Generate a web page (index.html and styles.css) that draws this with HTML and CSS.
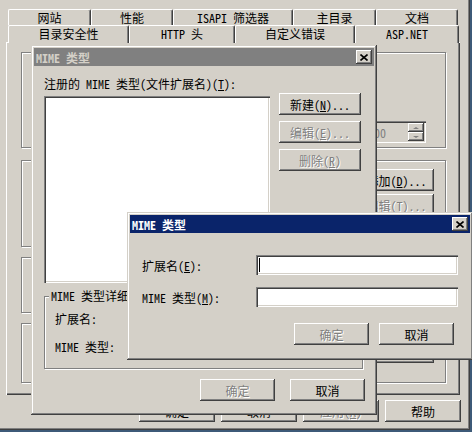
FILE: index.html
```html
<!DOCTYPE html>
<html lang="zh-CN">

<head>
    <meta charset="UTF-8">
    <title>MIME 类型</title>
    <link rel="stylesheet" href="styles.css">
</head>

<body>

    <div class="sheet">
        <div class="tabs row-back">
            <div class="tab">网站</div>
            <div class="tab">性能</div>
            <div class="tab">ISAPI 筛选器</div>
            <div class="tab">主目录</div>
            <div class="tab">文档</div>
        </div>
        <div class="tabs row-front">
            <div class="tab">目录安全性</div>
            <div class="tab active">HTTP 头</div>
            <div class="tab">自定义错误</div>
            <div class="tab">ASP.NET</div>
        </div>

        <div class="panel">
            <div class="group g1">
                <div class="spin-edit">
                    <span>1200</span>
                    <div class="spin">
                        <div class="spin-btn"><i class="arr up"></i></div>
                        <div class="spin-btn"><i class="arr down"></i></div>
                    </div>
                </div>
            </div>
            <div class="group g2">
                <button class="btn">添加(<u>D</u>)...</button>
                <button class="btn" disabled>编辑(<u>T</u>)...</button>
            </div>
            <div class="group g3"></div>
            <div class="group g4">
                <button class="btn">删除(<u>V</u>)</button>
            </div>
        </div>

        <div class="sheet-buttons">
            <button class="btn">确定</button>
            <button class="btn">取消</button>
            <button class="btn" disabled>应用(<u>A</u>)</button>
            <button class="btn">帮助</button>
        </div>
    </div>

    <!-- MIME 类型列表 (非活动窗口) -->
    <div class="win mime-list">
        <div class="titlebar inactive">
            <span>MIME 类型</span>
            <button class="close"><svg width="8" height="7" viewBox="0 0 8 7"><path d="M0.5 0.5 L7.5 6.5 M7.5 0.5 L0.5 6.5" stroke="#000" stroke-width="1.6" /></svg></button>
        </div>
        <div class="list-body">
            <div class="list-grid">
                <label class="list-label">注册的 MIME 类型(文件扩展名)(<u>T</u>):</label>
                <div class="listbox"></div>
                <div class="side-buttons">
                    <button class="btn">新建(<u>N</u>)...</button>
                    <button class="btn" disabled>编辑(<u>E</u>)...</button>
                    <button class="btn" disabled>删除(<u>R</u>)</button>
                </div>
            </div>

            <div class="details">
                <span class="legend">MIME 类型详细信息</span>
                <div class="detail-row">扩展名:</div>
                <div class="detail-row">MIME 类型:</div>
            </div>

            <div class="dialog-buttons">
                <button class="btn" disabled>确定</button>
                <button class="btn">取消</button>
            </div>
        </div>
    </div>

    <!-- MIME 类型编辑 (活动窗口) -->
    <div class="win mime-edit">
        <div class="titlebar">
            <span>MIME 类型</span>
            <button class="close"><svg width="8" height="7" viewBox="0 0 8 7"><path d="M0.5 0.5 L7.5 6.5 M7.5 0.5 L0.5 6.5" stroke="#000" stroke-width="1.6" /></svg></button>
        </div>
        <div class="edit-body">
            <div class="field-grid">
                <label>扩展名(<u>E</u>):</label>
                <div class="edit"><span class="caret"></span></div>
                <label>MIME 类型(<u>M</u>):</label>
                <div class="edit"></div>
            </div>
            <div class="dialog-buttons">
                <button class="btn" disabled>确定</button>
                <button class="btn">取消</button>
            </div>
        </div>
    </div>

</body>

</html>
```

FILE: styles.css
```css
* {
    box-sizing: border-box;
}

body {
    margin: 0;
    width: 472px;
    height: 432px;
    overflow: hidden;
    position: relative;
    background-color: #3d5a78;
    font-family: "Noto Sans Mono CJK SC", "Noto Sans CJK SC", sans-serif;
    font-size: 12px;
    color: #000;
}

/* 属性页 */
.sheet {
    width: 470px;
    height: 430px;
    background-color: #d4d0c8;
    padding: 9px 9px 0 6px;
    box-shadow: inset -1px -1px #404040, inset -2px -2px #808080;
}

.tabs {
    display: grid;
    margin-left: 2px;
}

.row-back {
    grid-template-columns: 83px 82px 120px 83px 82px;
    height: 16px;
}

.row-front {
    grid-template-columns: 121px 106px 120px 104px;
    height: 17px;
}

.tab {
    height: 100%;
    line-height: 15px;
    text-align: center;
    white-space: nowrap;
    background-color: #d4d0c8;
    border-top: 1px solid #fff;
    border-left: 1px solid #fff;
    border-right: 1px solid #404040;
    box-shadow: inset -1px 0 #808080;
    border-radius: 2px 2px 0 0;
}

.row-front .tab {
    line-height: 16px;
}

.tab.active {
    height: 18px;
    position: relative;
    z-index: 1;
}

.panel {
    width: 454px;
    height: 353px;
    padding: 9px 0 0 14px;
    border-top: 1px solid #fff;
    border-left: 1px solid #fff;
    box-shadow: inset -1px -1px #404040, inset -2px -2px #808080;
}

.group {
    width: 425px;
    border: 1px solid #808080;
    box-shadow: inset 1px 1px #fff, 1px 1px #fff;
    display: flex;
    flex-direction: column;
    align-items: flex-end;
}

.g1 {
    height: 96px;
    padding: 68px 19px 0 0;
}

.g2 {
    height: 87px;
    margin-top: 12px;
    padding: 8px 11px 0 0;
    gap: 3px;
}

.g3 {
    height: 56px;
    margin-top: 10px;
}

.g4 {
    height: 60px;
    margin-top: 10px;
    padding: 17px 11px 0 0;
}

.spin-edit {
    width: 86px;
    height: 22px;
    display: flex;
    align-items: center;
    justify-content: space-between;
    padding: 0 2px 0 22px;
    color: #808080;
    background-color: #d4d0c8;
    box-shadow: inset 1px 1px #808080, inset 2px 2px #404040, inset -1px -1px #fff, inset -2px -2px #d4d0c8;
}

.spin {
    width: 16px;
    height: 18px;
    display: flex;
    flex-direction: column;
}

.spin-btn {
    flex: 1;
    display: flex;
    align-items: center;
    justify-content: center;
    box-shadow: inset -1px -1px #404040, inset 1px 1px #fff, inset -2px -2px #808080;
}

.arr {
    width: 0;
    height: 0;
    border-left: 3px solid transparent;
    border-right: 3px solid transparent;
}

.arr.up {
    border-bottom: 2px solid #808080;
}

.arr.down {
    border-top: 2px solid #808080;
}

.sheet-buttons {
    display: flex;
    justify-content: flex-end;
    gap: 6px;
    margin-top: 5px;
}

.sheet-buttons .btn {
    width: 76px;
    height: 22px;
}

/* 按钮 */
.btn {
    width: 75px;
    height: 22px;
    padding: 0;
    border: none;
    font: inherit;
    color: #000;
    background-color: #d4d0c8;
    box-shadow: inset -1px -1px #404040, inset 1px 1px #fff, inset -2px -2px #808080;
    display: flex;
    align-items: center;
    justify-content: center;
    white-space: nowrap;
}

.btn:disabled {
    color: #808080;
    text-shadow: 1px 1px #fff;
}

/* 窗口 */
.win {
    position: absolute;
    width: 346px;
    padding: 3px;
    background-color: #d4d0c8;
    box-shadow: inset -1px -1px #404040, inset 1px 1px #d4d0c8, inset -2px -2px #808080, inset 2px 2px #fff;
}

.titlebar {
    height: 18px;
    display: flex;
    align-items: center;
    justify-content: space-between;
    padding: 0 2px 0 2px;
    background-color: #0a246a;
    color: #fff;
    font-weight: bold;
}

.titlebar.inactive {
    background-color: #808080;
    color: #d4d0c8;
}

.close {
    width: 16px;
    height: 14px;
    padding: 0;
    border: none;
    background-color: #d4d0c8;
    box-shadow: inset -1px -1px #404040, inset 1px 1px #fff, inset -2px -2px #808080;
    display: flex;
    align-items: center;
    justify-content: center;
}

.close svg {
    display: block;
}

.mime-list {
    left: 31px;
    top: 45px;
    height: 370px;
}

.list-body {
    padding: 11px 9px 0 10px;
}

.list-grid {
    display: grid;
    grid-template-columns: 226px 82px;
    column-gap: 9px;
}

.list-label {
    grid-column: 1 / 3;
    height: 13px;
    line-height: 13px;
    margin-bottom: 6px;
    white-space: nowrap;
}

.listbox {
    height: 187px;
    background-color: #fff;
    box-shadow: inset 1px 1px #808080, inset 2px 2px #404040, inset -1px -1px #fff, inset -2px -2px #d4d0c8;
}

.side-buttons {
    margin-top: -3px;
    display: flex;
    flex-direction: column;
    gap: 6px;
}

.side-buttons .btn {
    width: 82px;
}

.details {
    position: relative;
    width: 319px;
    height: 73px;
    margin-top: 13px;
    padding: 15px 0 0 10px;
    border: 1px solid #808080;
    box-shadow: inset 1px 1px #fff, 1px 1px #fff;
    display: flex;
    flex-direction: column;
    gap: 15px;
}

.legend {
    position: absolute;
    top: -8px;
    left: 4px;
    padding: 0 2px;
    line-height: 14px;
    background-color: #d4d0c8;
}

.detail-row {
    line-height: 13px;
}

.dialog-buttons {
    display: flex;
    justify-content: flex-end;
    gap: 15px;
    margin-top: 10px;
}

.mime-edit {
    left: 127px;
    top: 212px;
    height: 148px;
}

.edit-body {
    padding: 22px 16px 0 12px;
}

.field-grid {
    display: grid;
    grid-template-columns: 114px 202px;
    grid-auto-rows: 20px;
    row-gap: 12px;
    align-items: center;
}

.edit {
    height: 20px;
    position: relative;
    background-color: #fff;
    box-shadow: inset 1px 1px #808080, inset 2px 2px #404040, inset -1px -1px #fff, inset -2px -2px #d4d0c8;
}

.caret {
    position: absolute;
    left: 3px;
    top: 3px;
    width: 1px;
    height: 14px;
    background-color: #000;
}

.edit-body .dialog-buttons {
    margin-top: 16px;
    gap: 10px;
}
```
